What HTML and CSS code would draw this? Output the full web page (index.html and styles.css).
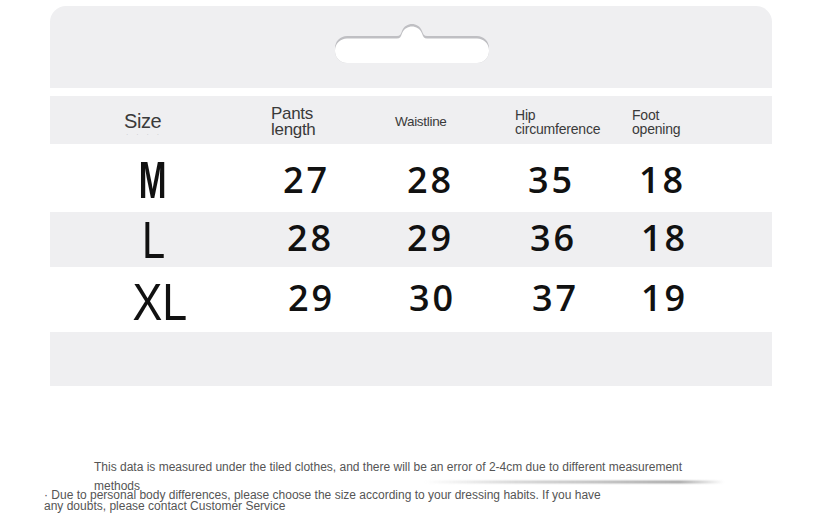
FILE: index.html
```html
<!DOCTYPE html>
<html>
<head>
<meta charset="utf-8">
<link rel="stylesheet" href="styles.css">
</head>
<body>
<div class="page">
  <div class="sheet">
    <div class="tag">
      <svg class="slot" width="154" height="40" viewBox="0 0 154 40">
        <path fill="#bfbfc3" d="M12 12 H62 C65 12 66 10 67 7 C69 2 73 0 77 0 C81 0 85 2 87 7 C88 10 89 12 92 12 H142 A12 12 0 0 1 154 24 V27 A12 12 0 0 1 142 39 H12 A12 12 0 0 1 0 27 V24 A12 12 0 0 1 12 12 Z"/>
        <path fill="#ffffff" transform="translate(0 2.5)" d="M12 12 H62 C65 12 66 10 67 7 C69 2 73 0 77 0 C81 0 85 2 87 7 C88 10 89 12 92 12 H142 A12 12 0 0 1 154 24 V24.5 A12 12 0 0 1 142 36.5 H12 A12 12 0 0 1 0 24.5 V24 A12 12 0 0 1 12 12 Z"/>
      </svg>
    </div>
    <div class="table">
      <div class="row head">
        <div class="c c0"><span class="h-size">Size</span><span class="ghost">· · · ·</span></div>
        <div class="c c1"><span class="h-pants">Pants<br>length</span></div>
        <div class="c c2"><span class="h-waist">Waistline</span></div>
        <div class="c c3"><span class="h-small">Hip<br>circumference</span></div>
        <div class="c c4"><span class="h-small">Foot<br>opening</span></div>
      </div>
      <div class="row r-m">
        <div class="c c0"><span class="sz sz-m">M</span></div>
        <div class="c c1"><span class="num">27</span></div>
        <div class="c c2"><span class="num">28</span></div>
        <div class="c c3"><span class="num">35</span></div>
        <div class="c c4"><span class="num">18</span></div>
      </div>
      <div class="row r-l grey">
        <div class="c c0"><span class="sz sz-l">L</span></div>
        <div class="c c1"><span class="num">28</span></div>
        <div class="c c2"><span class="num">29</span></div>
        <div class="c c3"><span class="num">36</span></div>
        <div class="c c4"><span class="num">18</span></div>
      </div>
      <div class="row r-xl">
        <div class="c c0"><span class="sz sz-xl">XL</span></div>
        <div class="c c1"><span class="num">29</span></div>
        <div class="c c2"><span class="num">30</span></div>
        <div class="c c3"><span class="num">37</span></div>
        <div class="c c4"><span class="num">19</span></div>
      </div>
      <div class="row foot grey"></div>
    </div>
  </div>
  <div class="notes">
    <p class="note1">This data is measured under the tiled clothes, and there will be an error of 2-4cm due to different measurement<br>methods<span class="smear"></span></p>
    <p class="note2">· Due to personal body differences, please choose the size according to your dressing habits. If you have<br>any doubts, please contact Customer Service</p>
  </div>
</div>
</body>
</html>
```

FILE: styles.css
```css
html, body {
  margin: 0;
  padding: 0;
  background: #ffffff;
}

.page {
  width: 824px;
  height: 513px;
  overflow: hidden;
  position: relative;
  font-family: "Liberation Sans", Arial, sans-serif;
}

.sheet {
  margin-left: 50px;
  width: 722px;
  padding-top: 6px;
}

.tag {
  height: 82px;
  background: #efeff1;
  border-radius: 16px 16px 0 0;
  display: flex;
  justify-content: center;
  align-items: flex-start;
  padding-top: 18px;
  box-sizing: border-box;
}

.slot {
  display: block;
  margin-left: 2px;
}

.table {
  margin-top: 8px;
  display: flex;
  flex-direction: column;
}

.row {
  display: grid;
  grid-template-columns: 221px 124px 120px 117px 140px;
  align-items: center;
}

.grey {
  background: #efeff1;
}

.head {
  height: 48px;
  background: #efeff1;
  color: #3a3a3a;
}

.r-m { height: 68px; }
.r-l { height: 55px; }
.r-xl { height: 65px; }
.foot { height: 54px; }

.c {
  position: relative;
  height: 100%;
  display: flex;
  align-items: center;
}

.head .c0 {
  padding-left: 74px;
}

.h-size {
  font-size: 20px;
  letter-spacing: -0.4px;
  margin-top: 3px;
}

.ghost {
  position: absolute;
  left: 76px;
  top: 35px;
  font-size: 7px;
  color: #c4c4c8;
  letter-spacing: 3px;
}

.h-pants {
  font-size: 17px;
  line-height: 16px;
  margin-top: 3px;
  letter-spacing: -0.3px;
}

.h-waist {
  font-size: 13.5px;
  letter-spacing: -0.3px;
  margin-top: 2px;
}

.h-small {
  font-size: 14px;
  line-height: 14px;
  letter-spacing: -0.2px;
  margin-top: 3px;
}

.num {
  font-family: "Open Sans", "Noto Sans", sans-serif;
  font-weight: 600;
  font-size: 36px;
  letter-spacing: 3px;
  color: #111;
  line-height: 1;
}

.row .c1 { padding-left: 12px; }
.row .c2 { padding-left: 12px; }
.row .c3 { padding-left: 13px; }
.row .c4 { padding-left: 7px; }

.r-m .num { margin-top: 4px; }
.r-l .num { margin-top: -4px; }
.r-l .c1 { padding-left: 16px; }
.r-l .c3 { padding-left: 15px; }
.r-l .c4 { padding-left: 9px; }
.r-xl .c1 { padding-left: 17px; }
.r-xl .c2 { padding-left: 14px; }
.r-xl .c3 { padding-left: 17px; }
.r-xl .c4 { padding-left: 9px; }
.r-xl .num { margin-top: -4px; }

.row .c0 {
  justify-content: center;
  padding-right: 12px;
}

.head .c0 {
  justify-content: flex-start;
}

.head .c1, .head .c2, .head .c3, .head .c4 {
  padding-left: 0;
}

.sz {
  display: inline-block;
  font-size: 52px;
  line-height: 1;
  color: #111;
}

.sz-m {
  font-weight: bold;
  transform: scaleX(0.64);
  margin-top: 4px;
  margin-left: -4px;
}

.sz-l {
  transform: scaleX(0.8);
  margin-top: 0px;
  margin-left: -2px;
}

.sz-xl {
  transform: scaleX(0.86);
  margin-top: 4px;
  margin-left: 10px;
}

.notes {
  color: #555555;
  font-size: 12px;
}

.note1 {
  margin: 0;
  position: absolute;
  left: 94px;
  top: 458px;
  line-height: 19px;
}

.smear {
  position: absolute;
  left: 330px;
  top: 23px;
  width: 300px;
  height: 2px;
  background: linear-gradient(90deg, rgba(120,120,120,0) 0%, rgba(120,120,120,0.45) 30%, rgba(90,90,90,0.8) 85%, rgba(120,120,120,0) 100%);
  filter: blur(0.8px);
}

.note2 {
  margin: 0;
  position: absolute;
  left: 40px;
  top: 490px;
  padding: 0 4px;
  line-height: 11px;
  background: #ffffff;
}
```
